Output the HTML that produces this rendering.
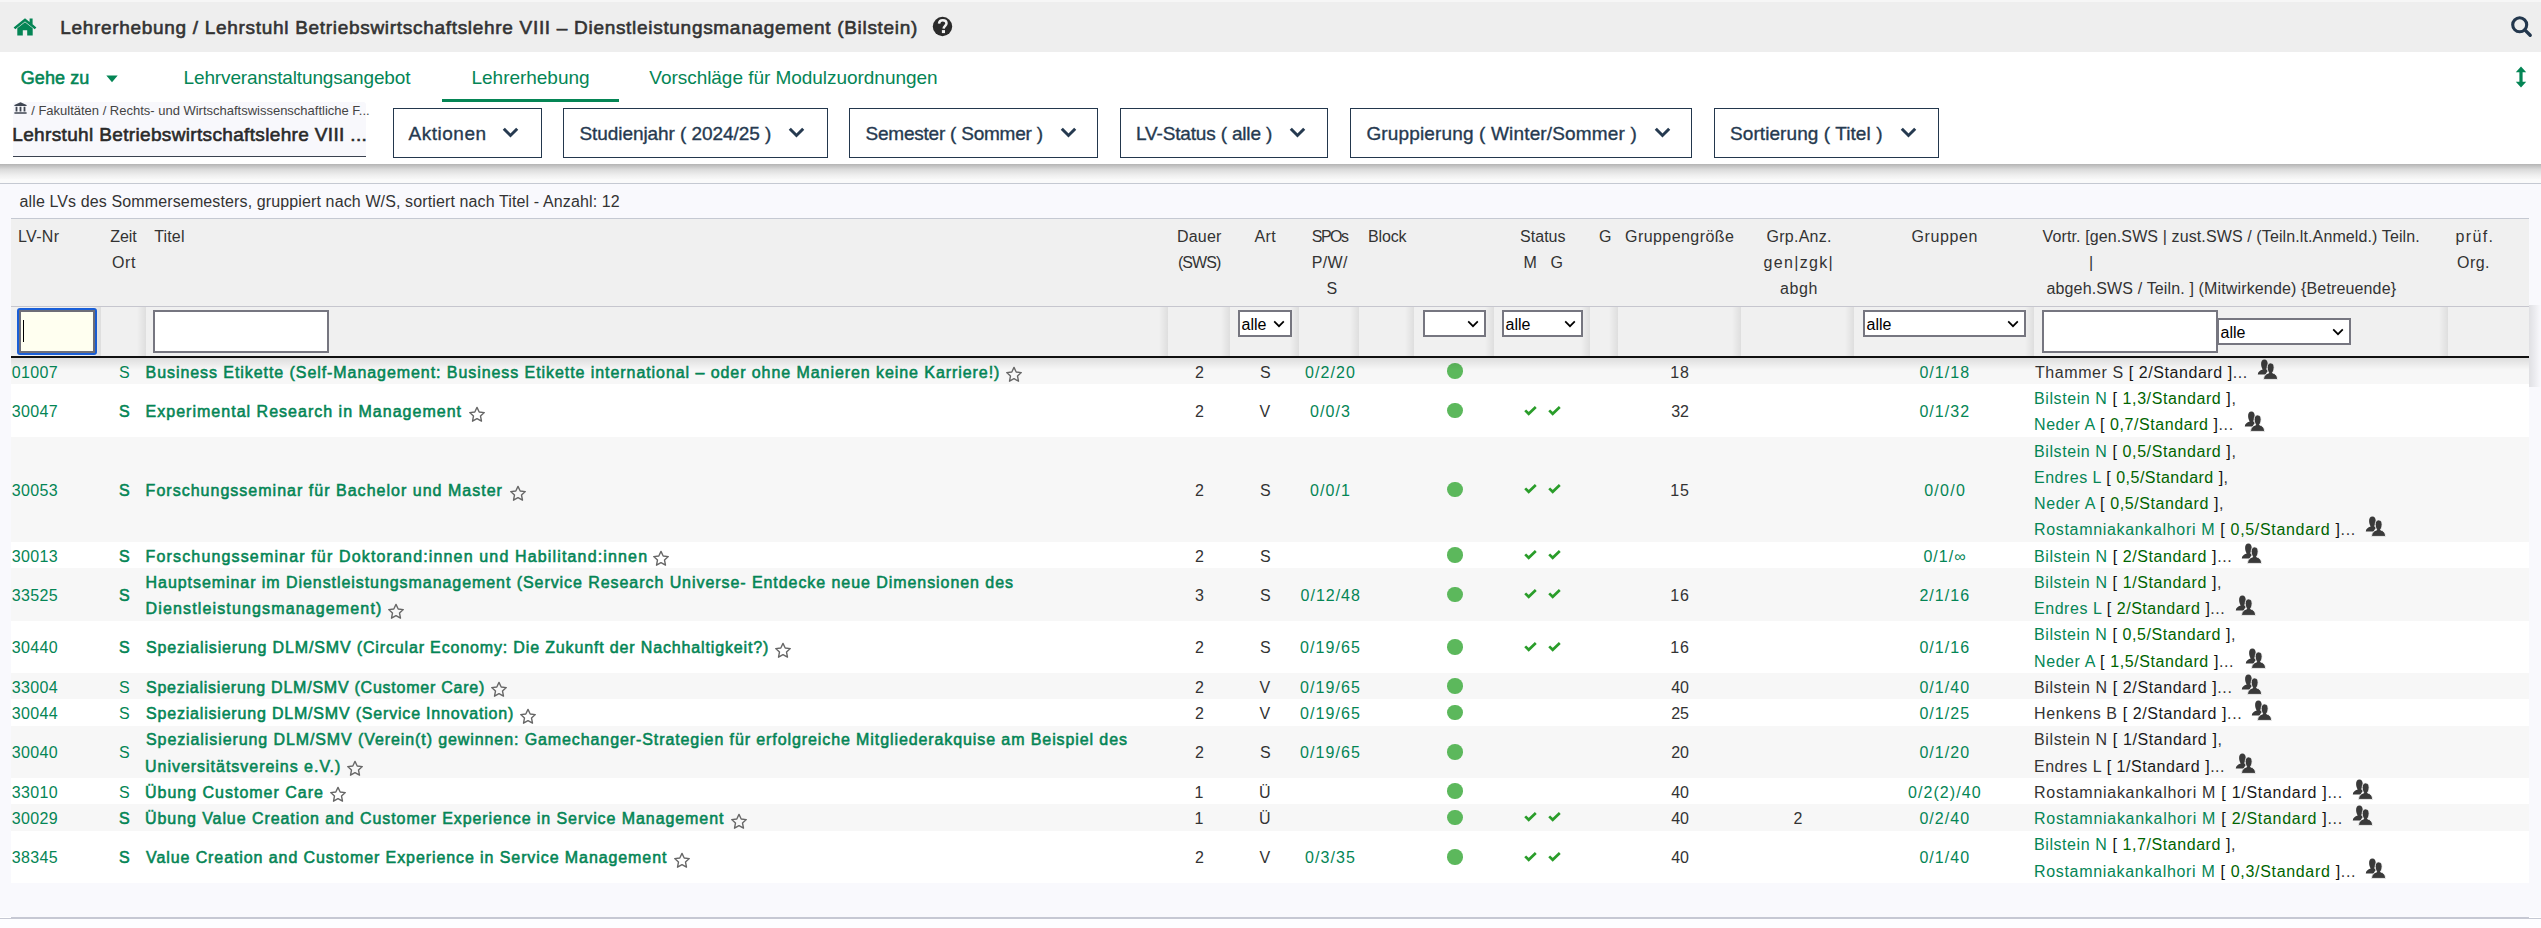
<!DOCTYPE html>
<html><head><meta charset="utf-8"><title>Lehrerhebung</title>
<style>
*{box-sizing:border-box;margin:0;padding:0}
html,body{width:2541px;height:928px;overflow:hidden;background:#fff;font-family:"Liberation Sans",sans-serif;color:#333}
.box{position:absolute}
.t{position:absolute;white-space:nowrap;line-height:30px;font-family:"Liberation Sans",sans-serif}
</style></head><body>
<div class="box" style="left:0;top:0;width:2541px;height:2px;background:#f6f6f6"></div>
<div class="box" style="left:0;top:2px;width:2541px;height:50px;background:#eeeeee"></div>
<svg class="box" style="left:13px;top:17px" width="24" height="19" viewBox="0 0 24 19"><path d="M12 1.2 L0.6 10.4 L2.3 12.3 L12 4.4 L21.7 12.3 L23.4 10.4 L19.6 7.3 V1.6 H16.6 V4.9 Z" fill="#048555"/><path d="M4.3 11.3 L12 5.2 L19.7 11.3 V18.4 H14.2 V13.2 H9.8 V18.4 H4.3 Z" fill="#048555"/></svg>
<div class="t" style="left:60.20px;top:13.00px;font-size:19px;-webkit-text-stroke:0.6px #333;color:#333;letter-spacing:0.696px;">Lehrerhebung / Lehrstuhl Betriebswirtschaftslehre VIII – Dienstleistungsmanagement (Bilstein)</div>
<svg class="box" style="left:932px;top:16px" width="21" height="21" viewBox="0 0 21 21"><circle cx="10.5" cy="10.5" r="9.7" fill="#2b2b2b"/><path d="M7 7.6 C7.3 5.2 8.9 4.2 10.7 4.2 C12.9 4.2 14.5 5.5 14.5 7.3 C14.5 9.6 11.8 10 11.6 12.6" fill="none" stroke="#f2f2f2" stroke-width="2.5"/><rect x="9.9" y="14.1" width="3.1" height="3" fill="#f2f2f2"/></svg>
<svg class="box" style="left:2509px;top:14px" width="24" height="24" viewBox="0 0 24 24"><circle cx="10.7" cy="10.8" r="7.0" fill="none" stroke="#23374d" stroke-width="3.1"/><path d="M15.8 15.9 L21.2 21.3" stroke="#23374d" stroke-width="3.4" stroke-linecap="round"/></svg>
<div class="t" style="left:20.70px;top:63.00px;font-size:18px;-webkit-text-stroke:0.55px #048555;color:#048555;letter-spacing:0.094px;">Gehe zu</div>
<svg class="box" style="left:106px;top:75px" width="12" height="8" viewBox="0 0 12 8"><path d="M0.3 0.5 H11.7 L6 7.3 Z" fill="#048555"/></svg>
<div class="t" style="left:183.60px;top:63.00px;font-size:19px;color:#048555;letter-spacing:-0.142px;">Lehrveranstaltungsangebot</div>
<div class="t" style="left:471.50px;top:63.00px;font-size:19px;color:#048555;letter-spacing:-0.023px;">Lehrerhebung</div>
<div class="box" style="left:442px;top:99px;width:177px;height:3px;background:#048555"></div>
<div class="t" style="left:649.30px;top:63.00px;font-size:19px;color:#048555;letter-spacing:-0.038px;">Vorschläge für Modulzuordnungen</div>
<svg class="box" style="left:2515px;top:66px" width="12" height="22" viewBox="0 0 12 22"><path d="M6 0.5 L11.2 6.3 H7.6 V15.7 H11.2 L6 21.5 L0.8 15.7 H4.4 V6.3 H0.8 Z" fill="#048555"/></svg>
<div class="box" style="left:13px;top:102px;width:353px;height:54px;background:#f8f8fc;border-radius:3px 3px 0 0"></div>
<svg class="box" style="left:14px;top:102px" width="13" height="12" viewBox="0 0 13 12"><path d="M6.5 0.3 L12.6 3 V3.9 H0.4 V3 Z M1.6 4.8 H3.4 V9.4 H1.6Z M5.6 4.8 H7.4 V9.4 H5.6Z M9.6 4.8 H11.4 V9.4 H9.6Z M0.4 10.3 H12.6 V11.7 H0.4Z" fill="#3f4652"/></svg>
<div class="t" style="left:31.20px;top:96.00px;font-size:13px;color:#444;letter-spacing:-0.007px;">/ Fakultäten / Rechts- und Wirtschaftswissenschaftliche F...</div>
<div class="t" style="left:12.30px;top:120.00px;font-size:19px;-webkit-text-stroke:0.6px #2a2a2a;color:#2a2a2a;letter-spacing:0.346px;">Lehrstuhl Betriebswirtschaftslehre VIII ...</div>
<div class="box" style="left:13px;top:156px;width:353px;height:1px;background:#3a4250"></div>
<div class="box" style="left:393px;top:108px;width:149px;height:50px;border:1px solid #23374d;background:#fff"></div>
<div class="t" style="left:408.50px;top:119.00px;font-size:19px;color:#263a50;letter-spacing:0.518px;-webkit-text-stroke:0.35px #263a50;">Aktionen</div>
<svg class="box" style="left:502.3px;top:126.5px" width="17" height="11" viewBox="0 0 17 11"><path d="M1.8 1.8 L8.5 8.5 L15.2 1.8" fill="none" stroke="#263a50" stroke-width="3"/></svg>
<div class="box" style="left:563px;top:108px;width:265px;height:50px;border:1px solid #23374d;background:#fff"></div>
<div class="t" style="left:579.40px;top:119.00px;font-size:19px;color:#263a50;letter-spacing:-0.058px;-webkit-text-stroke:0.35px #263a50;">Studienjahr ( 2024/25 )</div>
<svg class="box" style="left:788.2px;top:126.5px" width="17" height="11" viewBox="0 0 17 11"><path d="M1.8 1.8 L8.5 8.5 L15.2 1.8" fill="none" stroke="#263a50" stroke-width="3"/></svg>
<div class="box" style="left:849px;top:108px;width:249px;height:50px;border:1px solid #23374d;background:#fff"></div>
<div class="t" style="left:865.60px;top:119.00px;font-size:19px;color:#263a50;letter-spacing:-0.231px;-webkit-text-stroke:0.35px #263a50;">Semester ( Sommer )</div>
<svg class="box" style="left:1059.9px;top:126.5px" width="17" height="11" viewBox="0 0 17 11"><path d="M1.8 1.8 L8.5 8.5 L15.2 1.8" fill="none" stroke="#263a50" stroke-width="3"/></svg>
<div class="box" style="left:1120px;top:108px;width:208px;height:50px;border:1px solid #23374d;background:#fff"></div>
<div class="t" style="left:1136.10px;top:119.00px;font-size:19px;color:#263a50;letter-spacing:-0.171px;-webkit-text-stroke:0.35px #263a50;">LV-Status ( alle )</div>
<svg class="box" style="left:1289.1px;top:126.5px" width="17" height="11" viewBox="0 0 17 11"><path d="M1.8 1.8 L8.5 8.5 L15.2 1.8" fill="none" stroke="#263a50" stroke-width="3"/></svg>
<div class="box" style="left:1350px;top:108px;width:342px;height:50px;border:1px solid #23374d;background:#fff"></div>
<div class="t" style="left:1366.40px;top:119.00px;font-size:19px;color:#263a50;letter-spacing:0.152px;-webkit-text-stroke:0.35px #263a50;">Gruppierung ( Winter/Sommer )</div>
<svg class="box" style="left:1654.0px;top:126.5px" width="17" height="11" viewBox="0 0 17 11"><path d="M1.8 1.8 L8.5 8.5 L15.2 1.8" fill="none" stroke="#263a50" stroke-width="3"/></svg>
<div class="box" style="left:1714px;top:108px;width:225px;height:50px;border:1px solid #23374d;background:#fff"></div>
<div class="t" style="left:1730.00px;top:119.00px;font-size:19px;color:#263a50;letter-spacing:0.078px;-webkit-text-stroke:0.35px #263a50;">Sortierung ( Titel )</div>
<svg class="box" style="left:1900.0px;top:126.5px" width="17" height="11" viewBox="0 0 17 11"><path d="M1.8 1.8 L8.5 8.5 L15.2 1.8" fill="none" stroke="#263a50" stroke-width="3"/></svg>
<div class="box" style="left:0;top:164px;width:2541px;height:15px;background:linear-gradient(#b4b4b4,#dadada 35%,#efefef 75%,#f8f8f8)"></div>
<div class="box" style="left:0;top:179px;width:2541px;height:4px;background:#fafafa"></div>
<div class="box" style="left:0;top:183px;width:2541px;height:1px;background:#c5c9d2"></div>
<div class="box" style="left:0;top:184px;width:2541px;height:733px;background:#f9f9fd"></div>
<div class="t" style="left:19.50px;top:187.00px;font-size:16px;color:#333;letter-spacing:0.124px;">alle LVs des Sommersemesters, gruppiert nach W/S, sortiert nach Titel - Anzahl: 12</div>
<div class="box" style="left:11px;top:218px;width:2518px;height:1px;background:#c5c9d2"></div>
<div class="box" style="left:11px;top:219px;width:2518px;height:87px;background:#f0f0f0"></div>
<div class="box" style="left:11px;top:306px;width:2518px;height:1px;background:#c6c6ce"></div>
<div class="box" style="left:11px;top:307px;width:2518px;height:49px;background:#f0f0f0"></div>
<div class="t" style="left:18.10px;top:222.00px;font-size:16px;color:#333;letter-spacing:0.304px;">LV-Nr</div>
<div class="t" style="left:110.30px;top:222.00px;font-size:16px;color:#333;letter-spacing:-0.076px;">Zeit</div>
<div class="t" style="left:112.10px;top:248.00px;font-size:16px;color:#333;letter-spacing:0.563px;">Ort</div>
<div class="t" style="left:154.20px;top:222.00px;font-size:16px;color:#333;letter-spacing:0.155px;">Titel</div>
<div class="t" style="left:1177.00px;top:222.00px;font-size:16px;color:#333;letter-spacing:0.188px;">Dauer</div>
<div class="t" style="left:1177.90px;top:248.00px;font-size:16px;color:#333;letter-spacing:-0.943px;">(SWS)</div>
<div class="t" style="left:1254.50px;top:222.00px;font-size:16px;color:#333;letter-spacing:0.400px;">Art</div>
<div class="t" style="left:1311.80px;top:222.00px;font-size:16px;color:#333;letter-spacing:-1.530px;">SPOs</div>
<div class="t" style="left:1311.70px;top:248.00px;font-size:16px;color:#333;letter-spacing:0.360px;">P/W/</div>
<div class="t" style="left:1326.40px;top:274.00px;font-size:16px;color:#333;letter-spacing:0.000px;">S</div>
<div class="t" style="left:1367.90px;top:222.00px;font-size:16px;color:#333;letter-spacing:-0.106px;">Block</div>
<div class="t" style="left:1520.10px;top:222.00px;font-size:16px;color:#333;letter-spacing:0.008px;">Status</div>
<div class="t" style="left:1523.50px;top:248.00px;font-size:16px;color:#333;letter-spacing:0.000px;">M</div>
<div class="t" style="left:1550.40px;top:248.00px;font-size:16px;color:#333;letter-spacing:0.000px;">G</div>
<div class="t" style="left:1598.90px;top:222.00px;font-size:16px;color:#333;letter-spacing:0.000px;">G</div>
<div class="t" style="left:1625.00px;top:222.00px;font-size:16px;color:#333;letter-spacing:0.440px;">Gruppengröße</div>
<div class="t" style="left:1766.50px;top:222.00px;font-size:16px;color:#333;letter-spacing:0.259px;">Grp.Anz.</div>
<div class="t" style="left:1763.50px;top:248.00px;font-size:16px;color:#333;letter-spacing:1.321px;">gen|zgk|</div>
<div class="t" style="left:1780.00px;top:274.00px;font-size:16px;color:#333;letter-spacing:0.602px;">abgh</div>
<div class="t" style="left:1911.50px;top:222.00px;font-size:16px;color:#333;letter-spacing:0.605px;">Gruppen</div>
<div class="t" style="left:2455.50px;top:222.00px;font-size:16px;color:#333;letter-spacing:1.357px;">prüf.</div>
<div class="t" style="left:2457.00px;top:248.00px;font-size:16px;color:#333;letter-spacing:0.443px;">Org.</div>
<div class="t" style="left:2042.60px;top:222.00px;font-size:16px;color:#333;letter-spacing:0.114px;">Vortr. [gen.SWS | zust.SWS / (Teiln.lt.Anmeld.) Teiln.</div>
<div class="t" style="left:2089.00px;top:248.00px;font-size:16px;color:#333;letter-spacing:0.000px;">|</div>
<div class="t" style="left:2046.50px;top:274.00px;font-size:16px;color:#333;letter-spacing:0.142px;">abgeh.SWS / Teiln. ] (Mitwirkende) {Betreuende}</div>
<div class="box" style="left:17px;top:308px;width:80px;height:47px;border:2px solid #1a5fd8;border-radius:3px"></div>
<div class="box" style="left:19px;top:310px;width:76px;height:43px;border:2px solid #6e6e78;background:#fffff0"></div>
<div class="box" style="left:23px;top:320px;width:1px;height:22px;background:#000"></div>
<div class="box" style="left:153px;top:310px;width:176px;height:43px;border:2px solid #767680;background:#fff"></div>
<div class="box" style="left:2042px;top:310px;width:176px;height:43px;border:2px solid #767680;background:#fff"></div>
<div class="box" style="left:1238px;top:310px;width:54px;height:27px;border:2px solid #767680;background:#fff"></div>
<div class="t" style="left:1241.50px;top:310.00px;font-size:16px;color:#000;letter-spacing:0.000px;">alle</div>
<svg class="box" style="left:1273px;top:320px" width="12" height="8" viewBox="0 0 12 8"><path d="M1.2 1.4 L6 6.2 L10.8 1.4" fill="none" stroke="#000" stroke-width="1.7"/></svg>
<div class="box" style="left:1423px;top:310px;width:63px;height:27px;border:2px solid #767680;background:#fff"></div>
<svg class="box" style="left:1467px;top:320px" width="12" height="8" viewBox="0 0 12 8"><path d="M1.2 1.4 L6 6.2 L10.8 1.4" fill="none" stroke="#000" stroke-width="1.7"/></svg>
<div class="box" style="left:1502px;top:310px;width:81px;height:27px;border:2px solid #767680;background:#fff"></div>
<div class="t" style="left:1505.50px;top:310.00px;font-size:16px;color:#000;letter-spacing:0.000px;">alle</div>
<svg class="box" style="left:1564px;top:320px" width="12" height="8" viewBox="0 0 12 8"><path d="M1.2 1.4 L6 6.2 L10.8 1.4" fill="none" stroke="#000" stroke-width="1.7"/></svg>
<div class="box" style="left:1863px;top:310px;width:163px;height:27px;border:2px solid #767680;background:#fff"></div>
<div class="t" style="left:1866.50px;top:310.00px;font-size:16px;color:#000;letter-spacing:0.000px;">alle</div>
<svg class="box" style="left:2007px;top:320px" width="12" height="8" viewBox="0 0 12 8"><path d="M1.2 1.4 L6 6.2 L10.8 1.4" fill="none" stroke="#000" stroke-width="1.7"/></svg>
<div class="box" style="left:2217px;top:318px;width:134px;height:27px;border:2px solid #767680;background:#fff"></div>
<div class="t" style="left:2220.50px;top:318.00px;font-size:16px;color:#000;letter-spacing:0.000px;">alle</div>
<svg class="box" style="left:2332px;top:328px" width="12" height="8" viewBox="0 0 12 8"><path d="M1.2 1.4 L6 6.2 L10.8 1.4" fill="none" stroke="#000" stroke-width="1.7"/></svg>
<div class="box" style="left:92.0px;top:307px;width:9px;height:49px;background:linear-gradient(90deg,rgba(0,0,0,0),rgba(0,0,0,0.075))"></div>
<div class="box" style="left:137.0px;top:307px;width:9px;height:49px;background:linear-gradient(90deg,rgba(0,0,0,0),rgba(0,0,0,0.075))"></div>
<div class="box" style="left:1159.0px;top:307px;width:9px;height:49px;background:linear-gradient(90deg,rgba(0,0,0,0),rgba(0,0,0,0.075))"></div>
<div class="box" style="left:1221.0px;top:307px;width:9px;height:49px;background:linear-gradient(90deg,rgba(0,0,0,0),rgba(0,0,0,0.075))"></div>
<div class="box" style="left:1290.0px;top:307px;width:9px;height:49px;background:linear-gradient(90deg,rgba(0,0,0,0),rgba(0,0,0,0.075))"></div>
<div class="box" style="left:1350.0px;top:307px;width:9px;height:49px;background:linear-gradient(90deg,rgba(0,0,0,0),rgba(0,0,0,0.075))"></div>
<div class="box" style="left:1405.0px;top:307px;width:9px;height:49px;background:linear-gradient(90deg,rgba(0,0,0,0),rgba(0,0,0,0.075))"></div>
<div class="box" style="left:1485.0px;top:307px;width:9px;height:49px;background:linear-gradient(90deg,rgba(0,0,0,0),rgba(0,0,0,0.075))"></div>
<div class="box" style="left:1580.8px;top:307px;width:9px;height:49px;background:linear-gradient(90deg,rgba(0,0,0,0),rgba(0,0,0,0.075))"></div>
<div class="box" style="left:1608.7px;top:307px;width:9px;height:49px;background:linear-gradient(90deg,rgba(0,0,0,0),rgba(0,0,0,0.075))"></div>
<div class="box" style="left:1732.4px;top:307px;width:9px;height:49px;background:linear-gradient(90deg,rgba(0,0,0,0),rgba(0,0,0,0.075))"></div>
<div class="box" style="left:1845.0px;top:307px;width:9px;height:49px;background:linear-gradient(90deg,rgba(0,0,0,0),rgba(0,0,0,0.075))"></div>
<div class="box" style="left:2025.0px;top:307px;width:9px;height:49px;background:linear-gradient(90deg,rgba(0,0,0,0),rgba(0,0,0,0.075))"></div>
<div class="box" style="left:2439.0px;top:307px;width:9px;height:49px;background:linear-gradient(90deg,rgba(0,0,0,0),rgba(0,0,0,0.075))"></div>
<div class="box" style="left:2529px;top:305px;width:12px;height:82px;background:linear-gradient(90deg,rgba(0,0,0,0.10),rgba(0,0,0,0))"></div>
<div class="box" style="left:11px;top:356px;width:2518px;height:2px;background:#111"></div>
<div class="box" style="left:11px;top:358.00px;width:2518px;height:26.25px;background:#f7f7f7"></div>
<div class="t" style="left:11.70px;top:358.00px;font-size:16px;color:#048555;letter-spacing:0.377px;">01007</div>
<div class="t" style="left:119.00px;top:358.00px;font-size:16px;color:#048555;letter-spacing:0.000px;">S</div>
<div class="t" style="left:145.60px;top:358.00px;font-size:16px;-webkit-text-stroke:0.55px #048555;color:#048555;letter-spacing:0.932px;">Business Etikette (Self-Management: Business Etikette international – oder ohne Manieren keine Karriere!)</div>
<svg class="box" style="left:1005.2px;top:366.4px" width="18" height="17" viewBox="0 0 18 17"><path d="M9 1.4 L11.2 6 L16.3 6.6 L12.5 10 L13.5 15.2 L9 12.6 L4.5 15.2 L5.5 10 L1.7 6.6 L6.8 6 Z" fill="none" stroke="#666" stroke-width="1.35" stroke-linejoin="round"/></svg>
<div class="t" style="left:1195.00px;top:358.00px;font-size:16px;color:#333333;letter-spacing:0.000px;">2</div>
<div class="t" style="left:1260.00px;top:358.00px;font-size:16px;color:#333333;letter-spacing:0.000px;">S</div>
<div class="t" style="left:1305.00px;top:358.00px;font-size:16px;color:#048555;letter-spacing:1.063px;">0/2/20</div>
<div class="box" style="left:1447.25px;top:363.38px;width:15.5px;height:15.5px;border-radius:50%;background:#5cb85c"></div>
<div class="t" style="left:1670.35px;top:358.00px;font-size:16px;color:#333333;letter-spacing:0.802px;">18</div>
<div class="t" style="left:1919.40px;top:358.00px;font-size:16px;color:#048555;letter-spacing:1.063px;">0/1/18</div>
<div class="t" style="left:2035.00px;top:358px;font-size:16px;color:#333333;letter-spacing:0.570px"><span style="color:#333333">Thammer S</span> <span style="color:#111">[</span> <span style="color:#1a1a1a">2/Standard</span> <span style="color:#111">]</span>...</div>
<svg class="box" style="left:2256.8px;top:359.0px" width="21" height="21" viewBox="0 0 21 21"><path d="M7.4 0.6 C9.6 0.6 10.8 2.4 10.7 5.2 C10.6 7.6 9.8 9.2 9.1 10.3 C10 10.8 10.6 11.3 11 12 C9.8 13.1 9 14.3 8.5 15.4 H0.8 C0.7 13 2.9 11.3 5.7 10.4 C5 9.3 4.2 7.7 4.1 5.2 C4 2.4 5.2 0.6 7.4 0.6Z" fill="#3a3a3a"/><path d="M13.6 3.9 C15.9 3.9 17.2 5.8 17.1 8.6 C17 11.1 16.2 12.7 15.5 13.9 C18.3 14.7 20.4 16.3 20.7 20.4 H6.4 C6.8 16.3 9 14.7 11.8 13.9 C11.1 12.7 10.3 11.1 10.2 8.6 C10.1 5.8 11.4 3.9 13.6 3.9Z" fill="#3a3a3a" stroke="#f4f4f4" stroke-width="0.9"/></svg>
<div class="box" style="left:11px;top:384.25px;width:2518px;height:52.50px;background:#ffffff"></div>
<div class="t" style="left:11.70px;top:397.00px;font-size:16px;color:#048555;letter-spacing:0.377px;">30047</div>
<div class="t" style="left:119.00px;top:397.00px;font-size:16px;-webkit-text-stroke:0.55px #048555;color:#048555;letter-spacing:0.000px;">S</div>
<div class="t" style="left:145.60px;top:397.00px;font-size:16px;-webkit-text-stroke:0.55px #048555;color:#048555;letter-spacing:1.012px;">Experimental Research in Management</div>
<svg class="box" style="left:467.8px;top:405.8px" width="18" height="17" viewBox="0 0 18 17"><path d="M9 1.4 L11.2 6 L16.3 6.6 L12.5 10 L13.5 15.2 L9 12.6 L4.5 15.2 L5.5 10 L1.7 6.6 L6.8 6 Z" fill="none" stroke="#666" stroke-width="1.35" stroke-linejoin="round"/></svg>
<div class="t" style="left:1195.00px;top:397.00px;font-size:16px;color:#333333;letter-spacing:0.000px;">2</div>
<div class="t" style="left:1259.50px;top:397.00px;font-size:16px;color:#333333;letter-spacing:0.000px;">V</div>
<div class="t" style="left:1310.03px;top:397px;font-size:16px;color:#048555;letter-spacing:1.063px">0/0/3</div>
<div class="box" style="left:1447.25px;top:402.75px;width:15.5px;height:15.5px;border-radius:50%;background:#5cb85c"></div>
<svg class="box" style="left:1524.3px;top:405.5px" width="13" height="10" viewBox="0 0 13 10"><path d="M1.2 4.4 L4.7 7.8 L11.8 1.1" fill="none" stroke="#2a9d2a" stroke-width="2.7"/></svg>
<svg class="box" style="left:1548.3px;top:405.5px" width="13" height="10" viewBox="0 0 13 10"><path d="M1.2 4.4 L4.7 7.8 L11.8 1.1" fill="none" stroke="#2a9d2a" stroke-width="2.7"/></svg>
<div class="t" style="left:1671.35px;top:397.00px;font-size:16px;color:#333333;letter-spacing:-0.198px;">32</div>
<div class="t" style="left:1919.40px;top:397px;font-size:16px;color:#048555;letter-spacing:1.063px">0/1/32</div>
<div class="t" style="left:2034.00px;top:384px;font-size:16px;color:#333333;letter-spacing:0.588px"><span style="color:#048555">Bilstein N</span> <span style="color:#111">[</span> <span style="color:#006400">1,3/Standard</span> <span style="color:#111">]</span>,</div>
<div class="t" style="left:2034.00px;top:410px;font-size:16px;color:#333333;letter-spacing:0.572px"><span style="color:#048555">Neder A</span> <span style="color:#111">[</span> <span style="color:#006400">0,7/Standard</span> <span style="color:#111">]</span>...</div>
<svg class="box" style="left:2244.3px;top:411.0px" width="21" height="21" viewBox="0 0 21 21"><path d="M7.4 0.6 C9.6 0.6 10.8 2.4 10.7 5.2 C10.6 7.6 9.8 9.2 9.1 10.3 C10 10.8 10.6 11.3 11 12 C9.8 13.1 9 14.3 8.5 15.4 H0.8 C0.7 13 2.9 11.3 5.7 10.4 C5 9.3 4.2 7.7 4.1 5.2 C4 2.4 5.2 0.6 7.4 0.6Z" fill="#3a3a3a"/><path d="M13.6 3.9 C15.9 3.9 17.2 5.8 17.1 8.6 C17 11.1 16.2 12.7 15.5 13.9 C18.3 14.7 20.4 16.3 20.7 20.4 H6.4 C6.8 16.3 9 14.7 11.8 13.9 C11.1 12.7 10.3 11.1 10.2 8.6 C10.1 5.8 11.4 3.9 13.6 3.9Z" fill="#3a3a3a" stroke="#f4f4f4" stroke-width="0.9"/></svg>
<div class="box" style="left:11px;top:436.75px;width:2518px;height:105.00px;background:#f7f7f7"></div>
<div class="t" style="left:11.70px;top:476.00px;font-size:16px;color:#048555;letter-spacing:0.377px;">30053</div>
<div class="t" style="left:119.00px;top:476.00px;font-size:16px;-webkit-text-stroke:0.55px #048555;color:#048555;letter-spacing:0.000px;">S</div>
<div class="t" style="left:145.60px;top:476.00px;font-size:16px;-webkit-text-stroke:0.55px #048555;color:#048555;letter-spacing:1.016px;">Forschungsseminar für Bachelor und Master</div>
<svg class="box" style="left:508.8px;top:484.5px" width="18" height="17" viewBox="0 0 18 17"><path d="M9 1.4 L11.2 6 L16.3 6.6 L12.5 10 L13.5 15.2 L9 12.6 L4.5 15.2 L5.5 10 L1.7 6.6 L6.8 6 Z" fill="none" stroke="#666" stroke-width="1.35" stroke-linejoin="round"/></svg>
<div class="t" style="left:1195.00px;top:476.00px;font-size:16px;color:#333333;letter-spacing:0.000px;">2</div>
<div class="t" style="left:1260.00px;top:476.00px;font-size:16px;color:#333333;letter-spacing:0.000px;">S</div>
<div class="t" style="left:1310.03px;top:476px;font-size:16px;color:#048555;letter-spacing:1.063px">0/0/1</div>
<div class="box" style="left:1447.25px;top:481.50px;width:15.5px;height:15.5px;border-radius:50%;background:#5cb85c"></div>
<svg class="box" style="left:1524.3px;top:484.2px" width="13" height="10" viewBox="0 0 13 10"><path d="M1.2 4.4 L4.7 7.8 L11.8 1.1" fill="none" stroke="#2a9d2a" stroke-width="2.7"/></svg>
<svg class="box" style="left:1548.3px;top:484.2px" width="13" height="10" viewBox="0 0 13 10"><path d="M1.2 4.4 L4.7 7.8 L11.8 1.1" fill="none" stroke="#2a9d2a" stroke-width="2.7"/></svg>
<div class="t" style="left:1670.35px;top:476.00px;font-size:16px;color:#333333;letter-spacing:0.802px;">15</div>
<div class="t" style="left:1924.20px;top:476.00px;font-size:16px;color:#048555;letter-spacing:1.278px;">0/0/0</div>
<div class="t" style="left:2034.00px;top:437px;font-size:16px;color:#333333;letter-spacing:0.588px"><span style="color:#048555">Bilstein N</span> <span style="color:#111">[</span> <span style="color:#006400">0,5/Standard</span> <span style="color:#111">]</span>,</div>
<div class="t" style="left:2034.00px;top:463px;font-size:16px;color:#333333;letter-spacing:0.492px"><span style="color:#048555">Endres L</span> <span style="color:#111">[</span> <span style="color:#006400">0,5/Standard</span> <span style="color:#111">]</span>,</div>
<div class="t" style="left:2034.00px;top:489px;font-size:16px;color:#333333;letter-spacing:0.590px"><span style="color:#048555">Neder A</span> <span style="color:#111">[</span> <span style="color:#006400">0,5/Standard</span> <span style="color:#111">]</span>,</div>
<div class="t" style="left:2034.00px;top:515px;font-size:16px;color:#333333;letter-spacing:0.669px"><span style="color:#048555">Rostamniakankalhori M</span> <span style="color:#111">[</span> <span style="color:#006400">0,5/Standard</span> <span style="color:#111">]</span>...</div>
<svg class="box" style="left:2364.7px;top:516.0px" width="21" height="21" viewBox="0 0 21 21"><path d="M7.4 0.6 C9.6 0.6 10.8 2.4 10.7 5.2 C10.6 7.6 9.8 9.2 9.1 10.3 C10 10.8 10.6 11.3 11 12 C9.8 13.1 9 14.3 8.5 15.4 H0.8 C0.7 13 2.9 11.3 5.7 10.4 C5 9.3 4.2 7.7 4.1 5.2 C4 2.4 5.2 0.6 7.4 0.6Z" fill="#3a3a3a"/><path d="M13.6 3.9 C15.9 3.9 17.2 5.8 17.1 8.6 C17 11.1 16.2 12.7 15.5 13.9 C18.3 14.7 20.4 16.3 20.7 20.4 H6.4 C6.8 16.3 9 14.7 11.8 13.9 C11.1 12.7 10.3 11.1 10.2 8.6 C10.1 5.8 11.4 3.9 13.6 3.9Z" fill="#3a3a3a" stroke="#f4f4f4" stroke-width="0.9"/></svg>
<div class="box" style="left:11px;top:541.75px;width:2518px;height:26.25px;background:#ffffff"></div>
<div class="t" style="left:11.70px;top:542.00px;font-size:16px;color:#048555;letter-spacing:0.377px;">30013</div>
<div class="t" style="left:119.00px;top:542.00px;font-size:16px;-webkit-text-stroke:0.55px #048555;color:#048555;letter-spacing:0.000px;">S</div>
<div class="t" style="left:145.60px;top:542.00px;font-size:16px;-webkit-text-stroke:0.55px #048555;color:#048555;letter-spacing:1.152px;">Forschungsseminar für Doktorand:innen und Habilitand:innen</div>
<svg class="box" style="left:652.4px;top:550.1px" width="18" height="17" viewBox="0 0 18 17"><path d="M9 1.4 L11.2 6 L16.3 6.6 L12.5 10 L13.5 15.2 L9 12.6 L4.5 15.2 L5.5 10 L1.7 6.6 L6.8 6 Z" fill="none" stroke="#666" stroke-width="1.35" stroke-linejoin="round"/></svg>
<div class="t" style="left:1195.00px;top:542.00px;font-size:16px;color:#333333;letter-spacing:0.000px;">2</div>
<div class="t" style="left:1260.00px;top:542.00px;font-size:16px;color:#333333;letter-spacing:0.000px;">S</div>
<div class="box" style="left:1447.25px;top:547.12px;width:15.5px;height:15.5px;border-radius:50%;background:#5cb85c"></div>
<svg class="box" style="left:1524.3px;top:549.9px" width="13" height="10" viewBox="0 0 13 10"><path d="M1.2 4.4 L4.7 7.8 L11.8 1.1" fill="none" stroke="#2a9d2a" stroke-width="2.7"/></svg>
<svg class="box" style="left:1548.3px;top:549.9px" width="13" height="10" viewBox="0 0 13 10"><path d="M1.2 4.4 L4.7 7.8 L11.8 1.1" fill="none" stroke="#2a9d2a" stroke-width="2.7"/></svg>
<div class="t" style="left:1923.38px;top:542px;font-size:16px;color:#048555;letter-spacing:1.063px">0/1/∞</div>
<div class="t" style="left:2034.00px;top:542px;font-size:16px;color:#333333;letter-spacing:0.601px"><span style="color:#048555">Bilstein N</span> <span style="color:#111">[</span> <span style="color:#006400">2/Standard</span> <span style="color:#111">]</span>...</div>
<svg class="box" style="left:2241.2px;top:543.0px" width="21" height="21" viewBox="0 0 21 21"><path d="M7.4 0.6 C9.6 0.6 10.8 2.4 10.7 5.2 C10.6 7.6 9.8 9.2 9.1 10.3 C10 10.8 10.6 11.3 11 12 C9.8 13.1 9 14.3 8.5 15.4 H0.8 C0.7 13 2.9 11.3 5.7 10.4 C5 9.3 4.2 7.7 4.1 5.2 C4 2.4 5.2 0.6 7.4 0.6Z" fill="#3a3a3a"/><path d="M13.6 3.9 C15.9 3.9 17.2 5.8 17.1 8.6 C17 11.1 16.2 12.7 15.5 13.9 C18.3 14.7 20.4 16.3 20.7 20.4 H6.4 C6.8 16.3 9 14.7 11.8 13.9 C11.1 12.7 10.3 11.1 10.2 8.6 C10.1 5.8 11.4 3.9 13.6 3.9Z" fill="#3a3a3a" stroke="#f4f4f4" stroke-width="0.9"/></svg>
<div class="box" style="left:11px;top:568.00px;width:2518px;height:52.50px;background:#f7f7f7"></div>
<div class="t" style="left:11.70px;top:581.00px;font-size:16px;color:#048555;letter-spacing:0.377px;">33525</div>
<div class="t" style="left:119.00px;top:581.00px;font-size:16px;-webkit-text-stroke:0.55px #048555;color:#048555;letter-spacing:0.000px;">S</div>
<div class="t" style="left:145.60px;top:568.00px;font-size:16px;-webkit-text-stroke:0.55px #048555;color:#048555;letter-spacing:0.938px;">Hauptseminar im Dienstleistungsmanagement (Service Research Universe- Entdecke neue Dimensionen des</div>
<div class="t" style="left:145.60px;top:594.00px;font-size:16px;-webkit-text-stroke:0.55px #048555;color:#048555;letter-spacing:1.140px;">Dienstleistungsmanagement)</div>
<svg class="box" style="left:387.2px;top:602.6px" width="18" height="17" viewBox="0 0 18 17"><path d="M9 1.4 L11.2 6 L16.3 6.6 L12.5 10 L13.5 15.2 L9 12.6 L4.5 15.2 L5.5 10 L1.7 6.6 L6.8 6 Z" fill="none" stroke="#666" stroke-width="1.35" stroke-linejoin="round"/></svg>
<div class="t" style="left:1195.00px;top:581.00px;font-size:16px;color:#333333;letter-spacing:0.000px;">3</div>
<div class="t" style="left:1260.00px;top:581.00px;font-size:16px;color:#333333;letter-spacing:0.000px;">S</div>
<div class="t" style="left:1300.60px;top:581.00px;font-size:16px;color:#048555;letter-spacing:0.986px;">0/12/48</div>
<div class="box" style="left:1447.25px;top:586.50px;width:15.5px;height:15.5px;border-radius:50%;background:#5cb85c"></div>
<svg class="box" style="left:1524.3px;top:589.2px" width="13" height="10" viewBox="0 0 13 10"><path d="M1.2 4.4 L4.7 7.8 L11.8 1.1" fill="none" stroke="#2a9d2a" stroke-width="2.7"/></svg>
<svg class="box" style="left:1548.3px;top:589.2px" width="13" height="10" viewBox="0 0 13 10"><path d="M1.2 4.4 L4.7 7.8 L11.8 1.1" fill="none" stroke="#2a9d2a" stroke-width="2.7"/></svg>
<div class="t" style="left:1670.35px;top:581.00px;font-size:16px;color:#333333;letter-spacing:0.802px;">16</div>
<div class="t" style="left:1919.40px;top:581px;font-size:16px;color:#048555;letter-spacing:1.063px">2/1/16</div>
<div class="t" style="left:2034.00px;top:568px;font-size:16px;color:#333333;letter-spacing:0.597px"><span style="color:#048555">Bilstein N</span> <span style="color:#111">[</span> <span style="color:#006400">1/Standard</span> <span style="color:#111">]</span>,</div>
<div class="t" style="left:2034.00px;top:594px;font-size:16px;color:#333333;letter-spacing:0.539px"><span style="color:#048555">Endres L</span> <span style="color:#111">[</span> <span style="color:#006400">2/Standard</span> <span style="color:#111">]</span>...</div>
<svg class="box" style="left:2234.9px;top:595.0px" width="21" height="21" viewBox="0 0 21 21"><path d="M7.4 0.6 C9.6 0.6 10.8 2.4 10.7 5.2 C10.6 7.6 9.8 9.2 9.1 10.3 C10 10.8 10.6 11.3 11 12 C9.8 13.1 9 14.3 8.5 15.4 H0.8 C0.7 13 2.9 11.3 5.7 10.4 C5 9.3 4.2 7.7 4.1 5.2 C4 2.4 5.2 0.6 7.4 0.6Z" fill="#3a3a3a"/><path d="M13.6 3.9 C15.9 3.9 17.2 5.8 17.1 8.6 C17 11.1 16.2 12.7 15.5 13.9 C18.3 14.7 20.4 16.3 20.7 20.4 H6.4 C6.8 16.3 9 14.7 11.8 13.9 C11.1 12.7 10.3 11.1 10.2 8.6 C10.1 5.8 11.4 3.9 13.6 3.9Z" fill="#3a3a3a" stroke="#f4f4f4" stroke-width="0.9"/></svg>
<div class="box" style="left:11px;top:620.50px;width:2518px;height:52.50px;background:#ffffff"></div>
<div class="t" style="left:11.70px;top:633.00px;font-size:16px;color:#048555;letter-spacing:0.377px;">30440</div>
<div class="t" style="left:119.00px;top:633.00px;font-size:16px;-webkit-text-stroke:0.55px #048555;color:#048555;letter-spacing:0.000px;">S</div>
<div class="t" style="left:146.00px;top:633.00px;font-size:16px;-webkit-text-stroke:0.55px #048555;color:#048555;letter-spacing:0.851px;">Spezialisierung DLM/SMV (Circular Economy: Die Zukunft der Nachhaltigkeit?)</div>
<svg class="box" style="left:774.2px;top:642.0px" width="18" height="17" viewBox="0 0 18 17"><path d="M9 1.4 L11.2 6 L16.3 6.6 L12.5 10 L13.5 15.2 L9 12.6 L4.5 15.2 L5.5 10 L1.7 6.6 L6.8 6 Z" fill="none" stroke="#666" stroke-width="1.35" stroke-linejoin="round"/></svg>
<div class="t" style="left:1195.00px;top:633.00px;font-size:16px;color:#333333;letter-spacing:0.000px;">2</div>
<div class="t" style="left:1260.00px;top:633.00px;font-size:16px;color:#333333;letter-spacing:0.000px;">S</div>
<div class="t" style="left:1300.07px;top:633px;font-size:16px;color:#048555;letter-spacing:1.063px">0/19/65</div>
<div class="box" style="left:1447.25px;top:639.00px;width:15.5px;height:15.5px;border-radius:50%;background:#5cb85c"></div>
<svg class="box" style="left:1524.3px;top:641.8px" width="13" height="10" viewBox="0 0 13 10"><path d="M1.2 4.4 L4.7 7.8 L11.8 1.1" fill="none" stroke="#2a9d2a" stroke-width="2.7"/></svg>
<svg class="box" style="left:1548.3px;top:641.8px" width="13" height="10" viewBox="0 0 13 10"><path d="M1.2 4.4 L4.7 7.8 L11.8 1.1" fill="none" stroke="#2a9d2a" stroke-width="2.7"/></svg>
<div class="t" style="left:1670.35px;top:633.00px;font-size:16px;color:#333333;letter-spacing:0.802px;">16</div>
<div class="t" style="left:1919.40px;top:633px;font-size:16px;color:#048555;letter-spacing:1.063px">0/1/16</div>
<div class="t" style="left:2034.00px;top:620px;font-size:16px;color:#333333;letter-spacing:0.577px"><span style="color:#048555">Bilstein N</span> <span style="color:#111">[</span> <span style="color:#006400">0,5/Standard</span> <span style="color:#111">]</span>,</div>
<div class="t" style="left:2034.00px;top:647px;font-size:16px;color:#333333;letter-spacing:0.587px"><span style="color:#048555">Neder A</span> <span style="color:#111">[</span> <span style="color:#006400">1,5/Standard</span> <span style="color:#111">]</span>...</div>
<svg class="box" style="left:2244.7px;top:648.0px" width="21" height="21" viewBox="0 0 21 21"><path d="M7.4 0.6 C9.6 0.6 10.8 2.4 10.7 5.2 C10.6 7.6 9.8 9.2 9.1 10.3 C10 10.8 10.6 11.3 11 12 C9.8 13.1 9 14.3 8.5 15.4 H0.8 C0.7 13 2.9 11.3 5.7 10.4 C5 9.3 4.2 7.7 4.1 5.2 C4 2.4 5.2 0.6 7.4 0.6Z" fill="#3a3a3a"/><path d="M13.6 3.9 C15.9 3.9 17.2 5.8 17.1 8.6 C17 11.1 16.2 12.7 15.5 13.9 C18.3 14.7 20.4 16.3 20.7 20.4 H6.4 C6.8 16.3 9 14.7 11.8 13.9 C11.1 12.7 10.3 11.1 10.2 8.6 C10.1 5.8 11.4 3.9 13.6 3.9Z" fill="#3a3a3a" stroke="#f4f4f4" stroke-width="0.9"/></svg>
<div class="box" style="left:11px;top:673.00px;width:2518px;height:26.25px;background:#f7f7f7"></div>
<div class="t" style="left:11.70px;top:673.00px;font-size:16px;color:#048555;letter-spacing:0.377px;">33004</div>
<div class="t" style="left:119.00px;top:673.00px;font-size:16px;color:#048555;letter-spacing:0.000px;">S</div>
<div class="t" style="left:146.00px;top:673.00px;font-size:16px;-webkit-text-stroke:0.55px #048555;color:#048555;letter-spacing:0.760px;">Spezialisierung DLM/SMV (Customer Care)</div>
<svg class="box" style="left:490.2px;top:681.4px" width="18" height="17" viewBox="0 0 18 17"><path d="M9 1.4 L11.2 6 L16.3 6.6 L12.5 10 L13.5 15.2 L9 12.6 L4.5 15.2 L5.5 10 L1.7 6.6 L6.8 6 Z" fill="none" stroke="#666" stroke-width="1.35" stroke-linejoin="round"/></svg>
<div class="t" style="left:1195.00px;top:673.00px;font-size:16px;color:#333333;letter-spacing:0.000px;">2</div>
<div class="t" style="left:1259.50px;top:673.00px;font-size:16px;color:#333333;letter-spacing:0.000px;">V</div>
<div class="t" style="left:1300.07px;top:673px;font-size:16px;color:#048555;letter-spacing:1.063px">0/19/65</div>
<div class="box" style="left:1447.25px;top:678.38px;width:15.5px;height:15.5px;border-radius:50%;background:#5cb85c"></div>
<div class="t" style="left:1671.35px;top:673.00px;font-size:16px;color:#333333;letter-spacing:-0.198px;">40</div>
<div class="t" style="left:1919.40px;top:673px;font-size:16px;color:#048555;letter-spacing:1.063px">0/1/40</div>
<div class="t" style="left:2034.00px;top:673px;font-size:16px;color:#333333;letter-spacing:0.605px"><span style="color:#333333">Bilstein N</span> <span style="color:#111">[</span> <span style="color:#1a1a1a">2/Standard</span> <span style="color:#111">]</span>...</div>
<svg class="box" style="left:2241.3px;top:674.0px" width="21" height="21" viewBox="0 0 21 21"><path d="M7.4 0.6 C9.6 0.6 10.8 2.4 10.7 5.2 C10.6 7.6 9.8 9.2 9.1 10.3 C10 10.8 10.6 11.3 11 12 C9.8 13.1 9 14.3 8.5 15.4 H0.8 C0.7 13 2.9 11.3 5.7 10.4 C5 9.3 4.2 7.7 4.1 5.2 C4 2.4 5.2 0.6 7.4 0.6Z" fill="#3a3a3a"/><path d="M13.6 3.9 C15.9 3.9 17.2 5.8 17.1 8.6 C17 11.1 16.2 12.7 15.5 13.9 C18.3 14.7 20.4 16.3 20.7 20.4 H6.4 C6.8 16.3 9 14.7 11.8 13.9 C11.1 12.7 10.3 11.1 10.2 8.6 C10.1 5.8 11.4 3.9 13.6 3.9Z" fill="#3a3a3a" stroke="#f4f4f4" stroke-width="0.9"/></svg>
<div class="box" style="left:11px;top:699.25px;width:2518px;height:26.25px;background:#ffffff"></div>
<div class="t" style="left:11.70px;top:699.00px;font-size:16px;color:#048555;letter-spacing:0.377px;">30044</div>
<div class="t" style="left:119.00px;top:699.00px;font-size:16px;color:#048555;letter-spacing:0.000px;">S</div>
<div class="t" style="left:146.00px;top:699.00px;font-size:16px;-webkit-text-stroke:0.55px #048555;color:#048555;letter-spacing:0.808px;">Spezialisierung DLM/SMV (Service Innovation)</div>
<svg class="box" style="left:519.2px;top:707.6px" width="18" height="17" viewBox="0 0 18 17"><path d="M9 1.4 L11.2 6 L16.3 6.6 L12.5 10 L13.5 15.2 L9 12.6 L4.5 15.2 L5.5 10 L1.7 6.6 L6.8 6 Z" fill="none" stroke="#666" stroke-width="1.35" stroke-linejoin="round"/></svg>
<div class="t" style="left:1195.00px;top:699.00px;font-size:16px;color:#333333;letter-spacing:0.000px;">2</div>
<div class="t" style="left:1259.50px;top:699.00px;font-size:16px;color:#333333;letter-spacing:0.000px;">V</div>
<div class="t" style="left:1300.07px;top:699px;font-size:16px;color:#048555;letter-spacing:1.063px">0/19/65</div>
<div class="box" style="left:1447.25px;top:704.62px;width:15.5px;height:15.5px;border-radius:50%;background:#5cb85c"></div>
<div class="t" style="left:1671.35px;top:699.00px;font-size:16px;color:#333333;letter-spacing:-0.198px;">25</div>
<div class="t" style="left:1919.40px;top:699px;font-size:16px;color:#048555;letter-spacing:1.063px">0/1/25</div>
<div class="t" style="left:2034.00px;top:699px;font-size:16px;color:#333333;letter-spacing:0.594px"><span style="color:#333333">Henkens B</span> <span style="color:#111">[</span> <span style="color:#1a1a1a">2/Standard</span> <span style="color:#111">]</span>...</div>
<svg class="box" style="left:2251.1px;top:700.0px" width="21" height="21" viewBox="0 0 21 21"><path d="M7.4 0.6 C9.6 0.6 10.8 2.4 10.7 5.2 C10.6 7.6 9.8 9.2 9.1 10.3 C10 10.8 10.6 11.3 11 12 C9.8 13.1 9 14.3 8.5 15.4 H0.8 C0.7 13 2.9 11.3 5.7 10.4 C5 9.3 4.2 7.7 4.1 5.2 C4 2.4 5.2 0.6 7.4 0.6Z" fill="#3a3a3a"/><path d="M13.6 3.9 C15.9 3.9 17.2 5.8 17.1 8.6 C17 11.1 16.2 12.7 15.5 13.9 C18.3 14.7 20.4 16.3 20.7 20.4 H6.4 C6.8 16.3 9 14.7 11.8 13.9 C11.1 12.7 10.3 11.1 10.2 8.6 C10.1 5.8 11.4 3.9 13.6 3.9Z" fill="#3a3a3a" stroke="#f4f4f4" stroke-width="0.9"/></svg>
<div class="box" style="left:11px;top:725.50px;width:2518px;height:52.50px;background:#f7f7f7"></div>
<div class="t" style="left:11.70px;top:738.00px;font-size:16px;color:#048555;letter-spacing:0.377px;">30040</div>
<div class="t" style="left:119.00px;top:738.00px;font-size:16px;color:#048555;letter-spacing:0.000px;">S</div>
<div class="t" style="left:146.00px;top:725.00px;font-size:16px;-webkit-text-stroke:0.55px #048555;color:#048555;letter-spacing:0.905px;">Spezialisierung DLM/SMV (Verein(t) gewinnen: Gamechanger-Strategien für erfolgreiche Mitgliederakquise am Beispiel des</div>
<div class="t" style="left:145.00px;top:752.00px;font-size:16px;-webkit-text-stroke:0.55px #048555;color:#048555;letter-spacing:0.975px;">Universitätsvereins e.V.)</div>
<svg class="box" style="left:346.2px;top:760.1px" width="18" height="17" viewBox="0 0 18 17"><path d="M9 1.4 L11.2 6 L16.3 6.6 L12.5 10 L13.5 15.2 L9 12.6 L4.5 15.2 L5.5 10 L1.7 6.6 L6.8 6 Z" fill="none" stroke="#666" stroke-width="1.35" stroke-linejoin="round"/></svg>
<div class="t" style="left:1195.00px;top:738.00px;font-size:16px;color:#333333;letter-spacing:0.000px;">2</div>
<div class="t" style="left:1260.00px;top:738.00px;font-size:16px;color:#333333;letter-spacing:0.000px;">S</div>
<div class="t" style="left:1300.07px;top:738px;font-size:16px;color:#048555;letter-spacing:1.063px">0/19/65</div>
<div class="box" style="left:1447.25px;top:744.00px;width:15.5px;height:15.5px;border-radius:50%;background:#5cb85c"></div>
<div class="t" style="left:1671.35px;top:738.00px;font-size:16px;color:#333333;letter-spacing:-0.198px;">20</div>
<div class="t" style="left:1919.40px;top:738px;font-size:16px;color:#048555;letter-spacing:1.063px">0/1/20</div>
<div class="t" style="left:2034.00px;top:725px;font-size:16px;color:#333333;letter-spacing:0.617px"><span style="color:#333333">Bilstein N</span> <span style="color:#111">[</span> <span style="color:#1a1a1a">1/Standard</span> <span style="color:#111">]</span>,</div>
<div class="t" style="left:2034.00px;top:752px;font-size:16px;color:#333333;letter-spacing:0.526px"><span style="color:#333333">Endres L</span> <span style="color:#111">[</span> <span style="color:#1a1a1a">1/Standard</span> <span style="color:#111">]</span>...</div>
<svg class="box" style="left:2234.6px;top:753.0px" width="21" height="21" viewBox="0 0 21 21"><path d="M7.4 0.6 C9.6 0.6 10.8 2.4 10.7 5.2 C10.6 7.6 9.8 9.2 9.1 10.3 C10 10.8 10.6 11.3 11 12 C9.8 13.1 9 14.3 8.5 15.4 H0.8 C0.7 13 2.9 11.3 5.7 10.4 C5 9.3 4.2 7.7 4.1 5.2 C4 2.4 5.2 0.6 7.4 0.6Z" fill="#3a3a3a"/><path d="M13.6 3.9 C15.9 3.9 17.2 5.8 17.1 8.6 C17 11.1 16.2 12.7 15.5 13.9 C18.3 14.7 20.4 16.3 20.7 20.4 H6.4 C6.8 16.3 9 14.7 11.8 13.9 C11.1 12.7 10.3 11.1 10.2 8.6 C10.1 5.8 11.4 3.9 13.6 3.9Z" fill="#3a3a3a" stroke="#f4f4f4" stroke-width="0.9"/></svg>
<div class="box" style="left:11px;top:778.00px;width:2518px;height:26.25px;background:#ffffff"></div>
<div class="t" style="left:11.70px;top:778.00px;font-size:16px;color:#048555;letter-spacing:0.377px;">33010</div>
<div class="t" style="left:119.00px;top:778.00px;font-size:16px;color:#048555;letter-spacing:0.000px;">S</div>
<div class="t" style="left:145.00px;top:778.00px;font-size:16px;-webkit-text-stroke:0.55px #048555;color:#048555;letter-spacing:0.990px;">Übung Customer Care</div>
<svg class="box" style="left:329.2px;top:786.4px" width="18" height="17" viewBox="0 0 18 17"><path d="M9 1.4 L11.2 6 L16.3 6.6 L12.5 10 L13.5 15.2 L9 12.6 L4.5 15.2 L5.5 10 L1.7 6.6 L6.8 6 Z" fill="none" stroke="#666" stroke-width="1.35" stroke-linejoin="round"/></svg>
<div class="t" style="left:1194.50px;top:778.00px;font-size:16px;color:#333333;letter-spacing:0.000px;">1</div>
<div class="t" style="left:1259.00px;top:778.00px;font-size:16px;color:#333333;letter-spacing:0.000px;">Ü</div>
<div class="box" style="left:1447.25px;top:783.38px;width:15.5px;height:15.5px;border-radius:50%;background:#5cb85c"></div>
<div class="t" style="left:1671.35px;top:778.00px;font-size:16px;color:#333333;letter-spacing:-0.198px;">40</div>
<div class="t" style="left:1908.03px;top:778px;font-size:16px;color:#048555;letter-spacing:1.063px">0/2(2)/40</div>
<div class="t" style="left:2034.00px;top:778px;font-size:16px;color:#333333;letter-spacing:0.711px"><span style="color:#333333">Rostamniakankalhori M</span> <span style="color:#111">[</span> <span style="color:#1a1a1a">1/Standard</span> <span style="color:#111">]</span>...</div>
<svg class="box" style="left:2351.6px;top:779.0px" width="21" height="21" viewBox="0 0 21 21"><path d="M7.4 0.6 C9.6 0.6 10.8 2.4 10.7 5.2 C10.6 7.6 9.8 9.2 9.1 10.3 C10 10.8 10.6 11.3 11 12 C9.8 13.1 9 14.3 8.5 15.4 H0.8 C0.7 13 2.9 11.3 5.7 10.4 C5 9.3 4.2 7.7 4.1 5.2 C4 2.4 5.2 0.6 7.4 0.6Z" fill="#3a3a3a"/><path d="M13.6 3.9 C15.9 3.9 17.2 5.8 17.1 8.6 C17 11.1 16.2 12.7 15.5 13.9 C18.3 14.7 20.4 16.3 20.7 20.4 H6.4 C6.8 16.3 9 14.7 11.8 13.9 C11.1 12.7 10.3 11.1 10.2 8.6 C10.1 5.8 11.4 3.9 13.6 3.9Z" fill="#3a3a3a" stroke="#f4f4f4" stroke-width="0.9"/></svg>
<div class="box" style="left:11px;top:804.25px;width:2518px;height:26.25px;background:#f7f7f7"></div>
<div class="t" style="left:11.70px;top:804.00px;font-size:16px;color:#048555;letter-spacing:0.377px;">30029</div>
<div class="t" style="left:119.00px;top:804.00px;font-size:16px;-webkit-text-stroke:0.55px #048555;color:#048555;letter-spacing:0.000px;">S</div>
<div class="t" style="left:145.00px;top:804.00px;font-size:16px;-webkit-text-stroke:0.55px #048555;color:#048555;letter-spacing:0.927px;">Übung Value Creation and Customer Experience in Service Management</div>
<svg class="box" style="left:730.2px;top:812.6px" width="18" height="17" viewBox="0 0 18 17"><path d="M9 1.4 L11.2 6 L16.3 6.6 L12.5 10 L13.5 15.2 L9 12.6 L4.5 15.2 L5.5 10 L1.7 6.6 L6.8 6 Z" fill="none" stroke="#666" stroke-width="1.35" stroke-linejoin="round"/></svg>
<div class="t" style="left:1194.50px;top:804.00px;font-size:16px;color:#333333;letter-spacing:0.000px;">1</div>
<div class="t" style="left:1259.00px;top:804.00px;font-size:16px;color:#333333;letter-spacing:0.000px;">Ü</div>
<div class="box" style="left:1447.25px;top:809.62px;width:15.5px;height:15.5px;border-radius:50%;background:#5cb85c"></div>
<svg class="box" style="left:1524.3px;top:812.4px" width="13" height="10" viewBox="0 0 13 10"><path d="M1.2 4.4 L4.7 7.8 L11.8 1.1" fill="none" stroke="#2a9d2a" stroke-width="2.7"/></svg>
<svg class="box" style="left:1548.3px;top:812.4px" width="13" height="10" viewBox="0 0 13 10"><path d="M1.2 4.4 L4.7 7.8 L11.8 1.1" fill="none" stroke="#2a9d2a" stroke-width="2.7"/></svg>
<div class="t" style="left:1671.35px;top:804.00px;font-size:16px;color:#333333;letter-spacing:-0.198px;">40</div>
<div class="t" style="left:1793.50px;top:804.00px;font-size:16px;color:#333333;letter-spacing:0.000px;">2</div>
<div class="t" style="left:1919.40px;top:804px;font-size:16px;color:#048555;letter-spacing:1.063px">0/2/40</div>
<div class="t" style="left:2034.00px;top:804px;font-size:16px;color:#333333;letter-spacing:0.711px"><span style="color:#048555">Rostamniakankalhori M</span> <span style="color:#111">[</span> <span style="color:#006400">2/Standard</span> <span style="color:#111">]</span>...</div>
<svg class="box" style="left:2351.6px;top:805.0px" width="21" height="21" viewBox="0 0 21 21"><path d="M7.4 0.6 C9.6 0.6 10.8 2.4 10.7 5.2 C10.6 7.6 9.8 9.2 9.1 10.3 C10 10.8 10.6 11.3 11 12 C9.8 13.1 9 14.3 8.5 15.4 H0.8 C0.7 13 2.9 11.3 5.7 10.4 C5 9.3 4.2 7.7 4.1 5.2 C4 2.4 5.2 0.6 7.4 0.6Z" fill="#3a3a3a"/><path d="M13.6 3.9 C15.9 3.9 17.2 5.8 17.1 8.6 C17 11.1 16.2 12.7 15.5 13.9 C18.3 14.7 20.4 16.3 20.7 20.4 H6.4 C6.8 16.3 9 14.7 11.8 13.9 C11.1 12.7 10.3 11.1 10.2 8.6 C10.1 5.8 11.4 3.9 13.6 3.9Z" fill="#3a3a3a" stroke="#f4f4f4" stroke-width="0.9"/></svg>
<div class="box" style="left:11px;top:830.50px;width:2518px;height:52.50px;background:#ffffff"></div>
<div class="t" style="left:11.70px;top:843.00px;font-size:16px;color:#048555;letter-spacing:0.377px;">38345</div>
<div class="t" style="left:119.00px;top:843.00px;font-size:16px;-webkit-text-stroke:0.55px #048555;color:#048555;letter-spacing:0.000px;">S</div>
<div class="t" style="left:146.00px;top:843.00px;font-size:16px;-webkit-text-stroke:0.55px #048555;color:#048555;letter-spacing:0.912px;">Value Creation and Customer Experience in Service Management</div>
<svg class="box" style="left:673.2px;top:852.0px" width="18" height="17" viewBox="0 0 18 17"><path d="M9 1.4 L11.2 6 L16.3 6.6 L12.5 10 L13.5 15.2 L9 12.6 L4.5 15.2 L5.5 10 L1.7 6.6 L6.8 6 Z" fill="none" stroke="#666" stroke-width="1.35" stroke-linejoin="round"/></svg>
<div class="t" style="left:1195.00px;top:843.00px;font-size:16px;color:#333333;letter-spacing:0.000px;">2</div>
<div class="t" style="left:1259.50px;top:843.00px;font-size:16px;color:#333333;letter-spacing:0.000px;">V</div>
<div class="t" style="left:1305.05px;top:843px;font-size:16px;color:#048555;letter-spacing:1.063px">0/3/35</div>
<div class="box" style="left:1447.25px;top:849.00px;width:15.5px;height:15.5px;border-radius:50%;background:#5cb85c"></div>
<svg class="box" style="left:1524.3px;top:851.8px" width="13" height="10" viewBox="0 0 13 10"><path d="M1.2 4.4 L4.7 7.8 L11.8 1.1" fill="none" stroke="#2a9d2a" stroke-width="2.7"/></svg>
<svg class="box" style="left:1548.3px;top:851.8px" width="13" height="10" viewBox="0 0 13 10"><path d="M1.2 4.4 L4.7 7.8 L11.8 1.1" fill="none" stroke="#2a9d2a" stroke-width="2.7"/></svg>
<div class="t" style="left:1671.35px;top:843.00px;font-size:16px;color:#333333;letter-spacing:-0.198px;">40</div>
<div class="t" style="left:1919.40px;top:843px;font-size:16px;color:#048555;letter-spacing:1.063px">0/1/40</div>
<div class="t" style="left:2034.00px;top:830px;font-size:16px;color:#333333;letter-spacing:0.577px"><span style="color:#048555">Bilstein N</span> <span style="color:#111">[</span> <span style="color:#006400">1,7/Standard</span> <span style="color:#111">]</span>,</div>
<div class="t" style="left:2034.00px;top:857px;font-size:16px;color:#333333;letter-spacing:0.677px"><span style="color:#048555">Rostamniakankalhori M</span> <span style="color:#111">[</span> <span style="color:#006400">0,3/Standard</span> <span style="color:#111">]</span>...</div>
<svg class="box" style="left:2365.0px;top:858.0px" width="21" height="21" viewBox="0 0 21 21"><path d="M7.4 0.6 C9.6 0.6 10.8 2.4 10.7 5.2 C10.6 7.6 9.8 9.2 9.1 10.3 C10 10.8 10.6 11.3 11 12 C9.8 13.1 9 14.3 8.5 15.4 H0.8 C0.7 13 2.9 11.3 5.7 10.4 C5 9.3 4.2 7.7 4.1 5.2 C4 2.4 5.2 0.6 7.4 0.6Z" fill="#3a3a3a"/><path d="M13.6 3.9 C15.9 3.9 17.2 5.8 17.1 8.6 C17 11.1 16.2 12.7 15.5 13.9 C18.3 14.7 20.4 16.3 20.7 20.4 H6.4 C6.8 16.3 9 14.7 11.8 13.9 C11.1 12.7 10.3 11.1 10.2 8.6 C10.1 5.8 11.4 3.9 13.6 3.9Z" fill="#3a3a3a" stroke="#f4f4f4" stroke-width="0.9"/></svg>
<div class="box" style="left:11px;top:358px;width:2518px;height:12px;background:linear-gradient(rgba(0,0,0,0.10),rgba(0,0,0,0))"></div>
<div class="box" style="left:11px;top:917px;width:2518px;height:2px;background:#c6c8d3"></div>
<div class="box" style="left:0px;top:918px;width:11px;height:1px;background:#c6c8d3"></div>
<div class="box" style="left:2529px;top:918px;width:12px;height:1px;background:#c6c8d3"></div>
<div class="box" style="left:0;top:919px;width:2541px;height:9px;background:#fdfdff"></div>
</body></html>
